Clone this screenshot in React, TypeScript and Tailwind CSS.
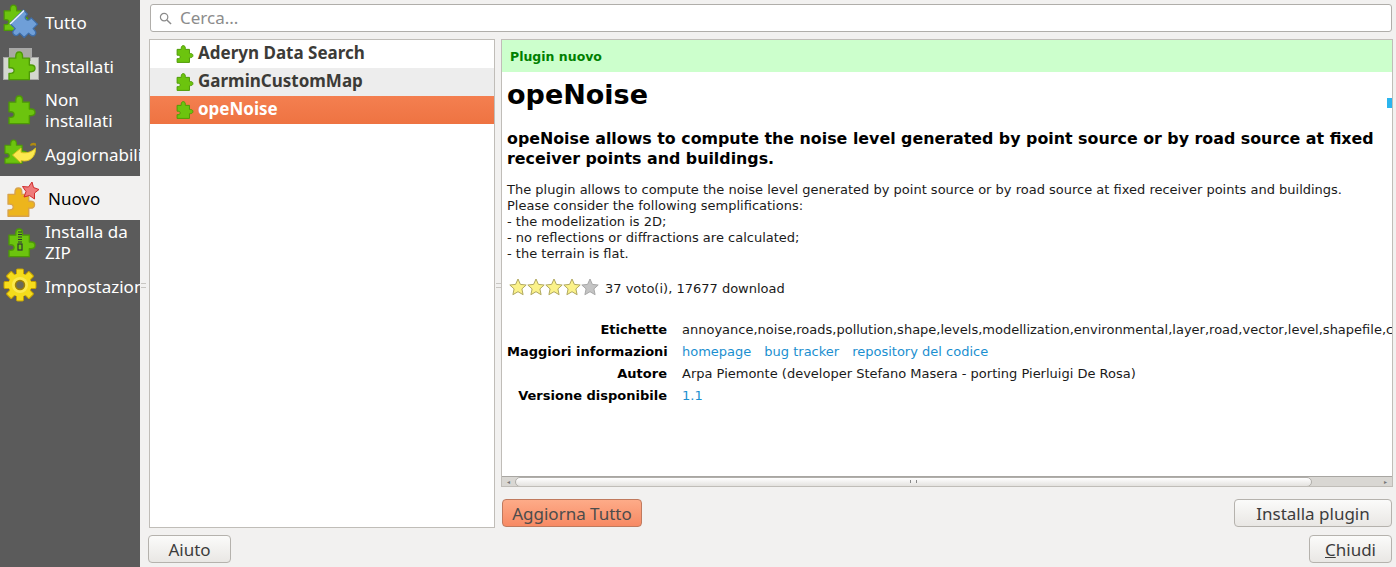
const PUZZLE = 'M7 9h6V7.500C13 5 14.200 3.500 16 3.500S19 5 19 7.500V9h6v6h1.500c2.300 0 3.500 1.200 3.500 3s-1.200 3-3.500 3H25v7H7v-5.500h1.500c2 0 3-1 3-2.500s-1-2.500-3-2.500H7z'

function Puzzle({ className = '' }: { className?: string }) {
  return (
    <svg viewBox="2.500 -0.250 32 32" className={className}>
      <path d={PUZZLE} fill="#6cc40e" stroke="#4e9a06" strokeWidth="1.400" strokeLinejoin="round" />
    </svg>
  )
}

// every nav icon is drawn in its row's own coordinates
function RowIcon({ children }: { children: React.ReactNode }) {
  return (
    <svg viewBox="0 0 45 44" className="w-[45px] h-[44px]">
      {children}
    </svg>
  )
}

function Piece({ transform, fill = '#6cc40e', stroke = '#4e9a06' }: { transform: string; fill?: string; stroke?: string }) {
  return (
    <g transform={transform}>
      <path d={PUZZLE} fill={fill} stroke={stroke} strokeWidth="1.200" strokeLinejoin="round" />
    </g>
  )
}

function TuttoIcon() {
  return (
    <RowIcon>
      <Piece transform="translate(-3 1.500) scale(1.030)" />
      <Piece transform="translate(24 27.700) rotate(135) scale(1.050) translate(-18.500 -15.750)" fill="#6f9fd8" stroke="#3f6ea8" />
      <path d="M10 24L24 10.500" stroke="#eef4fb" strokeWidth="1.500" />
    </RowIcon>
  )
}

function InstalledIcon() {
  return (
    <RowIcon>
      <rect x="9.500" y="4.500" width="22" height="12" fill="#d3d7cf" stroke="#a8a8a8" />
      <rect x="3.500" y="13.500" width="35" height="22" fill="#d3d7cf" stroke="#a8a8a8" />
      <rect x="10" y="5" width="21" height="12" fill="#a9a9a4" />
      <Piece transform="translate(1.100 4) scale(1.130)" />
    </RowIcon>
  )
}

function UpdateIcon() {
  return (
    <RowIcon>
      <Piece transform="translate(-1.650 4.700) scale(0.950)" />
      <path d="M12.500 23L21 16V20.500C27 21.500 32 20 35.500 16C36 24 30 31 21 28.500V31z" fill="#fce94f" stroke="#d8c020" strokeWidth="1" strokeLinejoin="round" />
      <path d="M30 13c1-2.500 4-3 6-1.500v2.500c-2-1-4-1-5 0z" fill="#b08a10" />
    </RowIcon>
  )
}

function NewIcon() {
  return (
    <RowIcon>
      <Piece transform="translate(0 8) scale(1.150)" fill="#edb51c" stroke="#d8a24a" />
      <path d="M32 6l1.500 5.500 5.500 2-4.500 3.500 0 6-5-3.500-5.500 1.500 2-5.500-3.500-5 6 .5z" fill="#ef7b7b" stroke="#d02c2c" strokeWidth="1" strokeLinejoin="round" />
    </RowIcon>
  )
}

function ZipIcon() {
  return (
    <RowIcon>
      <Piece transform="translate(1.100 5) scale(1.130)" />
      <path d="M18 12h4M18 14.500h4M18 17h4M18 19.500h4M18 22h4" stroke="#2e3436" strokeWidth="1" />
      <rect x="18" y="24" width="4" height="6" fill="none" stroke="#2e3436" strokeWidth="1.200" />
    </RowIcon>
  )
}

function GearIcon() {
  const teeth = [0, 45, 90, 135, 180, 225, 270, 315]
  return (
    <RowIcon>
      <g transform="translate(20 21)">
        {teeth.map((a) => (
          <rect key={a} x="-3.500" y="-16" width="7" height="8" rx="1" fill="#f5dc1c" stroke="#c4a000" strokeWidth="1" transform={`rotate(${a})`} />
        ))}
        <circle r="11.500" fill="#f5dc1c" />
        <circle r="8" fill="#fbe94e" />
        <circle r="4.500" fill="#6a6a5a" stroke="#a08000" strokeWidth="1.500" />
      </g>
    </RowIcon>
  )
}

function Star({ on }: { on: boolean }) {
  return (
    <svg viewBox="0 0 18 18" className="w-[18px] h-[18px]">
      <path
        d="M9 1l2.400 5.400 5.800.6-4.300 3.900 1.200 5.800L9 13.700l-5.100 3 1.200-5.800L.8 7l5.800-.6z"
        fill={on ? '#fbf28a' : '#c4c4c4'}
        stroke={on ? '#b0a860' : '#a8a8a8'}
        strokeWidth="1"
      />
    </svg>
  )
}

function Grip({ className }: { className: string }) {
  return <div className={`absolute w-[5px] h-[5px] border-y border-[#c8c6c2] ${className}`} />
}

function NavItem({ icon, label, active, pad }: { icon: React.ReactNode; label: string; active?: boolean; pad?: boolean }) {
  return (
    <div className={`h-[44px] flex items-center overflow-hidden ${active ? 'bg-[#f2f1f0] text-black' : 'text-white'}`}>
      <div className="w-[45px] shrink-0">{icon}</div>
      <div className={`text-[17px] leading-[21px] ${pad ? 'ml-[3px]' : ''} max-w-[95px]`}>{label}</div>
    </div>
  )
}

function ListRow({ label, className }: { label: string; className: string }) {
  return (
    <div className={`h-[28px] flex items-center pl-[24px] font-bold text-[17px] ${className}`}>
      <Puzzle className="w-[22px] h-[22px] mr-[2px] shrink-0" />
      <span className="-mt-[2px]">{label}</span>
    </div>
  )
}

function Btn({ label, className = '' }: { label: React.ReactNode; className?: string }) {
  return (
    <button
      type="button"
      className={`h-[28px] rounded-[4px] border border-[#b5b2ad] bg-gradient-to-b from-[#fbfbfa] to-[#e9e7e4] text-[#3c3c3c] text-[17px] leading-none ${className}`}
    >
      {label}
    </button>
  )
}

function InfoRow({ label, children }: { label: string; children: React.ReactNode }) {
  return (
    <div className="h-[22px] flex items-center whitespace-nowrap">
      <div className="w-[160px] shrink-0 text-right font-bold text-black">{label}</div>
      <div className="ml-[15px] text-[#1a1a1a]">{children}</div>
    </div>
  )
}

export default function App() {
  return (
    <div className="flex h-[567px] w-[1396px] overflow-hidden bg-[#f2f1f0] font-['Noto_Sans','Open_Sans',sans-serif]">
      <aside className="w-[140px] shrink-0 bg-[#5b5b5b]">
        <NavItem icon={<TuttoIcon />} label="Tutto" />
        <NavItem icon={<InstalledIcon />} label="Installati" />
        <NavItem
          icon={
            <RowIcon>
              <Piece transform="translate(1.100 4) scale(1.130)" />
            </RowIcon>
          }
          label="Non installati"
        />
        <NavItem icon={<UpdateIcon />} label="Aggiornabili" />
        <NavItem icon={<NewIcon />} label="Nuovo" active pad />
        <NavItem icon={<ZipIcon />} label="Installa da ZIP" />
        <NavItem icon={<GearIcon />} label="Impostazioni" />
      </aside>

      <main className="relative flex-1 flex flex-col pl-[9px] pr-[3px] pt-[4px] pb-[4px] min-w-0">
        <Grip className="left-[1px] top-[283px]" />
        <Grip className="left-[356px] top-[283px]" />
        <div className="mx-[1px] h-[28px] shrink-0 rounded-[3px] border border-[#b0aeaa] bg-white flex items-center pl-[8px]">
          <svg viewBox="0 0 14 14" className="w-[13px] h-[13px] text-[#8a8a8a]">
            <circle cx="5.500" cy="5.500" r="4" fill="none" stroke="currentColor" strokeWidth="1.300" />
            <path d="M8.500 8.500L13 13" stroke="currentColor" strokeWidth="1.500" />
          </svg>
          <span className="ml-[8px] text-[17px] text-[#8c8c8c]">Cerca...</span>
        </div>

        <div className="flex-1 flex mt-[7px] min-h-0">
          <div className="w-[346px] h-[489px] shrink-0 border border-[#c0bdb8] bg-white">
            <ListRow label="Aderyn Data Search" className="text-[#3c3b37]" />
            <ListRow label="GarminCustomMap" className="bg-[#ededed] text-[#3c3b37]" />
            <ListRow label="opeNoise" className="bg-gradient-to-b from-[#f47f50] to-[#ee7342] text-white" />
          </div>

          <div className="ml-[6px] flex-1 min-w-0 flex flex-col">
            <div className="relative h-[448px] shrink-0 border border-[#c0bdb8] bg-white overflow-hidden text-[13px] leading-[16px] text-[#1a1a1a] font-['DejaVu_Sans',Verdana,sans-serif]">
              <div className="h-[32px] bg-[#ccffcc] flex items-center pl-[8px] pt-[2px] text-[12.500px] font-bold text-[#008000]">Plugin nuovo</div>
              <div className="absolute right-0 top-[58px] w-[5px] h-[10px] bg-[#2bb5ee]" />
              <div className="pl-[5px]">
                <h1 className="mt-[5px] text-[27px] leading-[36px] font-bold text-black">opeNoise</h1>
                <h2 className="mt-[16px] text-[15.850px] leading-[20px] font-bold text-black">
                  opeNoise allows to compute the noise level generated by point source or by road source at fixed receiver points and buildings.
                </h2>
                <div className="mt-[13px]">
                  <div>The plugin allows to compute the noise level generated by point source or by road source at fixed receiver points and buildings.</div>
                  <div>Please consider the following semplifications:</div>
                  <div>- the modelization is 2D;</div>
                  <div>- no reflections or diffractions are calculated;</div>
                  <div>- the terrain is flat.</div>
                </div>
                <div className="mt-[14px] flex items-center ml-[2px]">
                  <div className="flex">
                    <Star on />
                    <Star on />
                    <Star on />
                    <Star on />
                    <Star on={false} />
                  </div>
                  <span className="ml-[6px] mt-[5px]">37 voto(i), 17677 download</span>
                </div>
                <div className="mt-[22px]">
                  <InfoRow label="Etichette">annoyance,noise,roads,pollution,shape,levels,modellization,environmental,layer,road,vector,level,shapefile,calculation</InfoRow>
                  <InfoRow label="Maggiori informazioni">
                    <span className="text-[#1b8fd0]">homepage</span>
                    <span className="ml-[13px] text-[#1b8fd0]">bug tracker</span>
                    <span className="ml-[13px] text-[#1b8fd0]">repository del codice</span>
                  </InfoRow>
                  <InfoRow label="Autore">Arpa Piemonte (developer Stefano Masera - porting Pierluigi De Rosa)</InfoRow>
                  <InfoRow label="Versione disponibile">
                    <span className="text-[#1b8fd0]">1.1</span>
                  </InfoRow>
                </div>
              </div>
              <div className="absolute left-0 right-0 bottom-0 h-[10px] border-t border-[#a8a6a2] bg-[#d9d7d3] flex items-center">
                <div className="w-[13px] text-[6px] leading-none text-center text-[#777]">◂</div>
                <div className="w-[797px] h-[10px] rounded-full border border-[#b0aeaa] bg-gradient-to-b from-white to-[#e4e2df] flex items-center justify-center">
                  <div className="w-[7px] h-[3px] border-x border-[#888]" />
                </div>
                <div className="flex-1" />
                <div className="w-[13px] text-[6px] leading-none text-center text-[#777]">▸</div>
              </div>
            </div>

            <div className="mt-[12px] flex justify-between">
              <button
                type="button"
                className="ml-[1px] h-[28px] w-[140px] rounded-[4px] border border-[#c07a5e] bg-gradient-to-b from-[#fdab88] to-[#f78a64] text-[#4c4c4c] text-[17px] leading-none"
              >
                Aggiorna Tutto
              </button>
              <Btn label="Installa plugin" className="w-[158px] mr-[1px]" />
            </div>
          </div>
        </div>

        <div className="mt-[7px] flex justify-between">
          <Btn label="Aiuto" className="w-[83px] -ml-[1px]" />
          <Btn
            label={
              <>
                <span className="underline">C</span>hiudi
              </>
            }
            className="w-[83px] mr-[1px]"
          />
        </div>
      </main>
    </div>
  )
}
